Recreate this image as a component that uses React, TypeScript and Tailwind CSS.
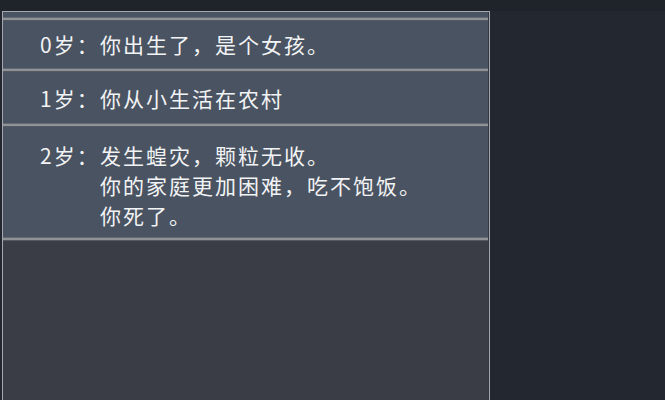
import React from "react";

const rows: { age: string; lines: string[]; h: string; pt: string }[] = [
  { age: "0岁：", lines: ["你出生了，是个女孩。"], h: "h-[47px]", pt: "pt-[8px]" },
  { age: "1岁：", lines: ["你从小生活在农村"], h: "h-[51px]", pt: "pt-[11px]" },
  { age: "2岁：", lines: ["发生蝗灾，颗粒无收。", "你的家庭更加困难，吃不饱饭。", "你死了。"], h: "h-[110px]", pt: "pt-[13px]" },
];

function Sep() {
  return <div className="h-[4px] border-t border-b border-t-[#656a72] border-b-[#545961] bg-[#8f9297]" />;
}

export default function App() {
  return (
    <div
      className="w-[665px] h-[400px] overflow-hidden bg-[#232830] flex flex-col"
      style={{ fontFamily: '"Noto Sans CJK SC", "Noto Sans", sans-serif' }}
    >
      <div className="h-[11px] bg-[#1f232a] shrink-0" />
      <div className="ml-[2px] w-[488px] flex-1 border-t border-l border-r border-[#a4a8ae] flex flex-col">
        <div className="flex-1 flex flex-col border-r border-[#333840]">
          <div className="h-[5px] bg-[#4a5361]" />
          {rows.map((r) => (
            <React.Fragment key={r.age}>
              <Sep />
              <div className={`${r.h} ${r.pt} bg-[#4a5361] flex pl-[37px] text-[21px] tracking-[2px] leading-[30px] text-[#f2f3f5]`}>
                <div className="w-[60px] shrink-0 whitespace-nowrap">{r.age}</div>
                <div className="flex flex-col whitespace-nowrap">
                  {r.lines.map((l) => (
                    <div key={l}>{l}</div>
                  ))}
                </div>
              </div>
            </React.Fragment>
          ))}
          <Sep />
          <div className="flex-1 bg-[#3a3d45]" />
        </div>
      </div>
    </div>
  );
}
